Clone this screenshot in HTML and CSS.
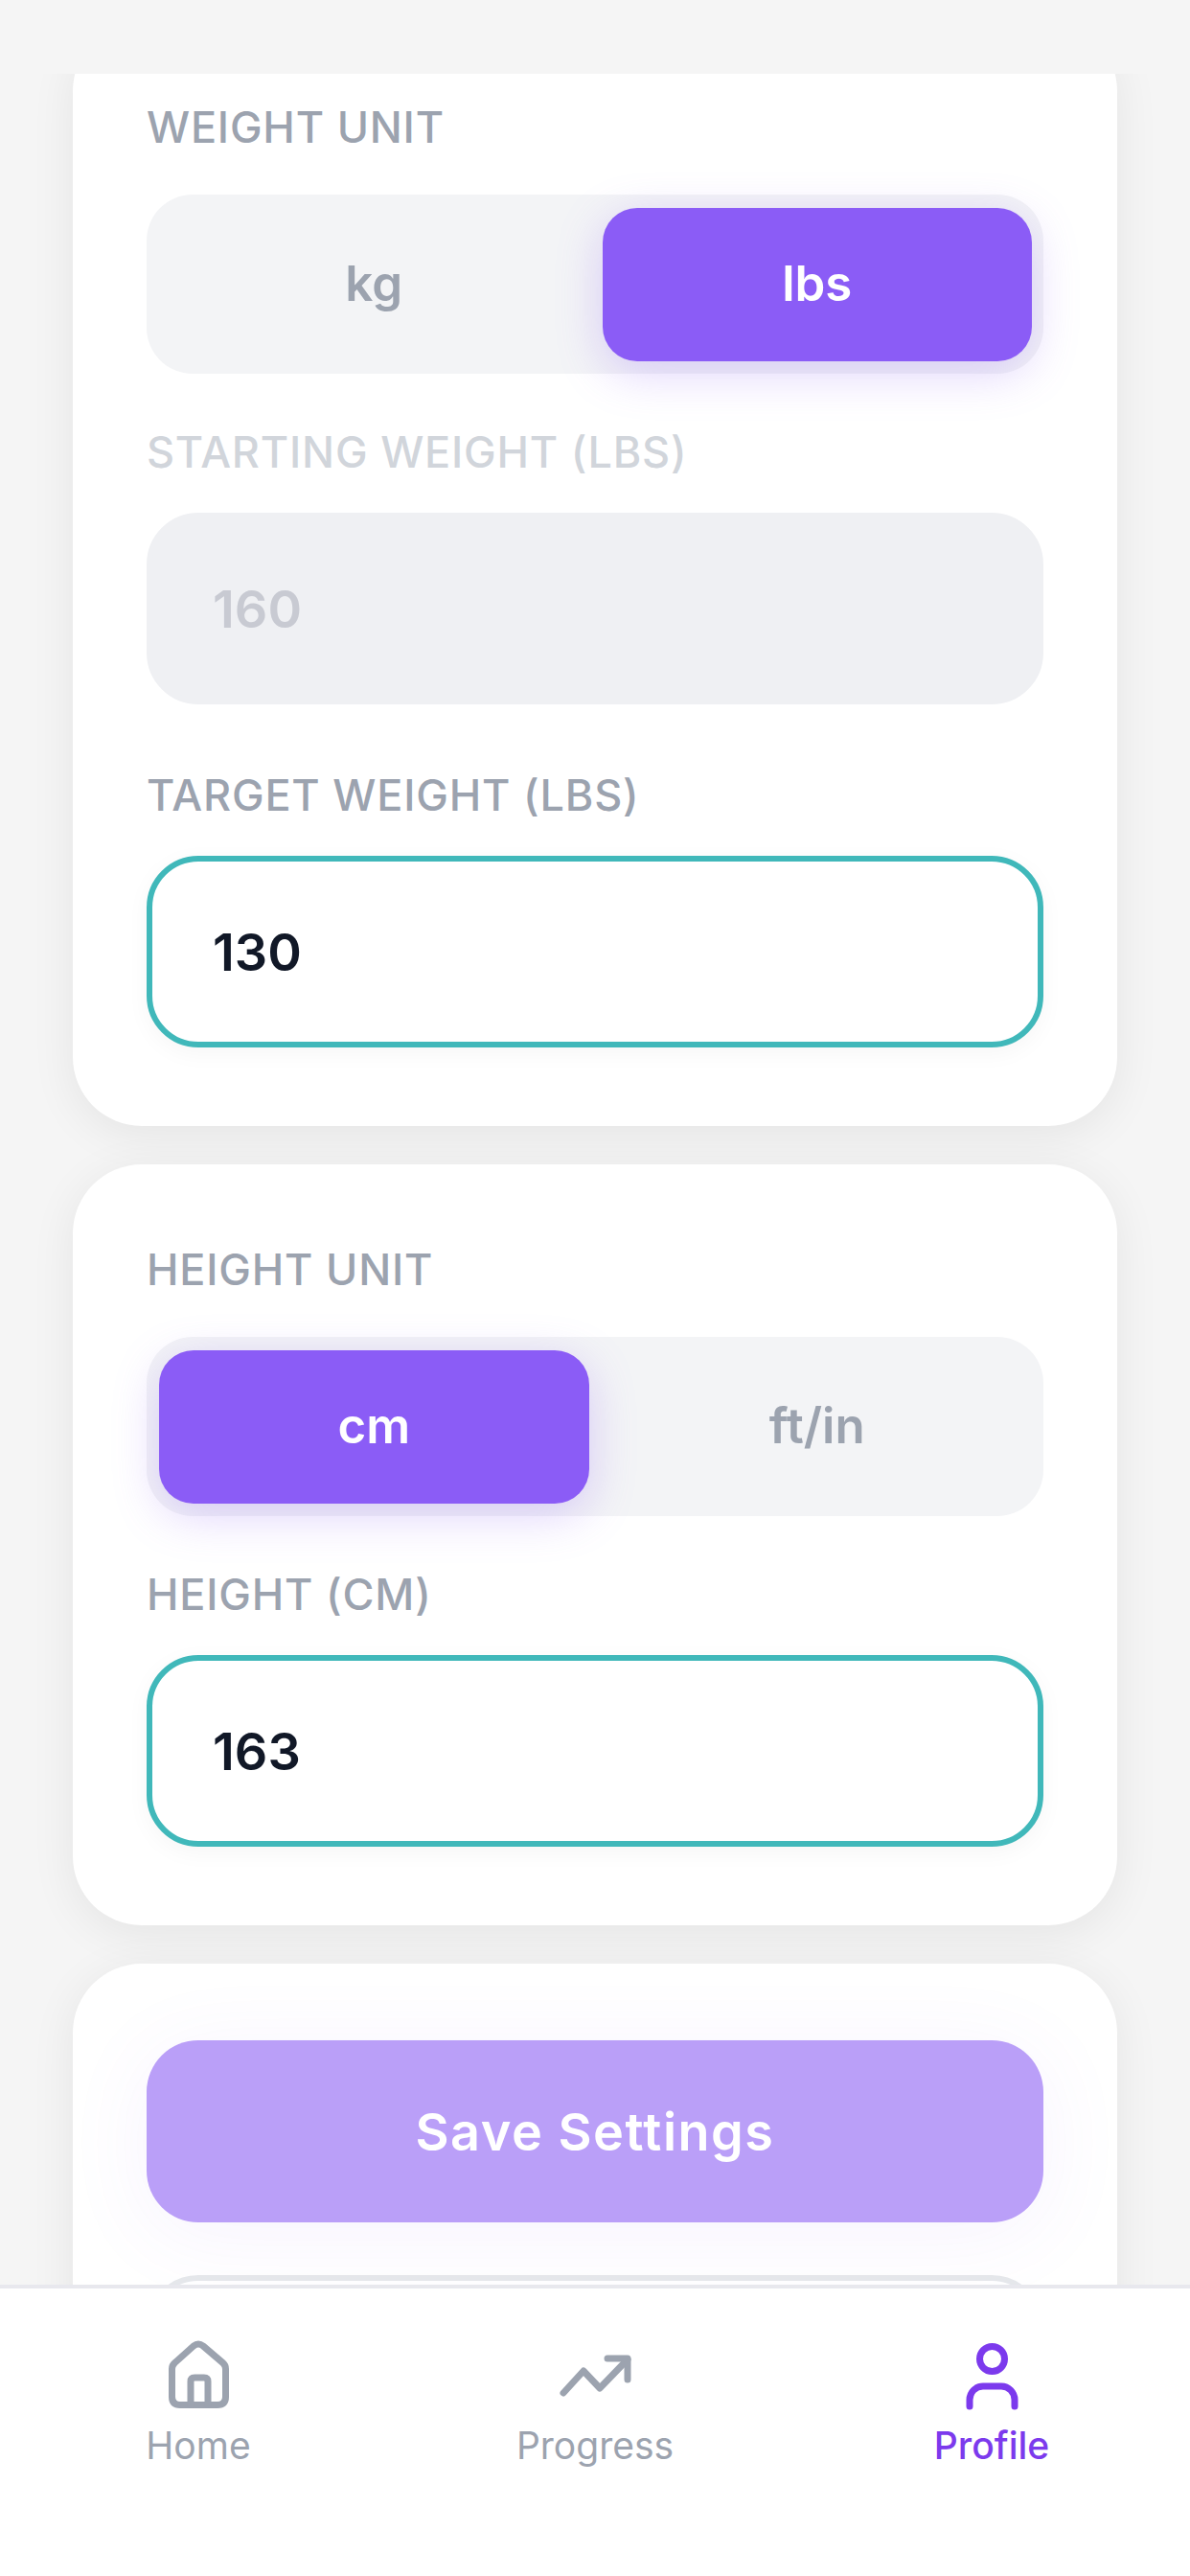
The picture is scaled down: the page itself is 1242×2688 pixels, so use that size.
FILE: index.html
```html
<!DOCTYPE html>
<html>
<head lang="en">
    <meta charset="UTF-8">
    <title>Profile</title>
    <link rel="stylesheet" href="styles.css">
</head>
<body>
<div class="screen">
    <div class="scroll">
        <div class="scrollInner">
            <div class="card">
                <div class="label">WEIGHT UNIT</div>
                <div class="seg">
                    <div class="segItem">kg</div>
                    <div class="segItem segActive">lbs</div>
                </div>
                <div class="label labelOff">STARTING WEIGHT (LBS)</div>
                <div class="input inputOff">160</div>
                <div class="label">TARGET WEIGHT (LBS)</div>
                <div class="input">130</div>
            </div>
            <div class="card">
                <div class="label">HEIGHT UNIT</div>
                <div class="seg">
                    <div class="segItem segActive">cm</div>
                    <div class="segItem">ft/in</div>
                </div>
                <div class="label">HEIGHT (CM)</div>
                <div class="input">163</div>
            </div>
            <div class="card saveCard">
                <div class="saveBtn">Save Settings</div>
                <div class="ghostBtn"></div>
            </div>
        </div>
    </div>
    <div class="nav">
        <div class="navItem">
            <svg class="navIcon" viewBox="0 0 84 84">
                <path d="M14.5 36Q14.5 32 17.5 29.5L37 12Q42 8 47 12L67.5 29.5Q70.5 32 70.5 36V65Q70.5 73.5 62 73.5H23Q14.5 73.5 14.5 65Z"/>
                <path d="M34 73.5V49Q34 45 38 45H48Q52 45 52 49V73.5"/>
            </svg>
            <span>Home</span>
        </div>
        <div class="navItem">
            <svg class="navIcon" viewBox="0 0 84 84">
                <path d="M9 61L30 38L47 56L76 26"/>
                <path d="M55 25H76V47"/>
            </svg>
            <span>Progress</span>
        </div>
        <div class="navItem navOn">
            <svg class="navIcon" viewBox="0 0 84 84">
                <circle cx="42.5" cy="25.5" r="13"/>
                <path d="M19 75V68A14 14 0 0 1 33 54H52A14 14 0 0 1 66 68V75"/>
            </svg>
            <span>Profile</span>
        </div>
    </div>
</div>
</body>
</html>
```

FILE: styles.css
```css
*{
    margin:0;
    padding:0;
    box-sizing:border-box;
}
html,body{
    height:100%;
}
body{
    background:#f5f5f5;
    font-family:Inter,"Liberation Sans",sans-serif;
    overflow:hidden;
}
.screen{
    width:1242px;
    height:2688px;
    display:flex;
    flex-direction:column;
    padding-top:77px;
}
.scroll{
    flex:1;
    min-height:0;
    overflow:hidden;
    padding:0 76px;
}
.scrollInner{
    margin-top:-54px;
    display:flex;
    flex-direction:column;
    gap:40px;
}
.card{
    background:#fff;
    border-radius:72px;
    padding:83px 77px 82px;
    box-shadow:0 9px 48px rgba(0,0,0,.07);
}
.saveCard{
    padding-top:80px;
}
.label{
    font-size:45px;
    line-height:54px;
    font-weight:500;
    letter-spacing:.8px;
    color:#9ca3af;
    margin-bottom:36px;
}
.labelOff{
    color:#d1d5db;
}
.seg{
    display:flex;
    gap:14px;
    height:187px;
    padding:14px 12px 13px 13px;
    margin:43px 0 55px;
    background:#f3f4f6;
    border-radius:48px;
}
.segItem{
    flex:1;
    display:flex;
    align-items:center;
    justify-content:center;
    padding-bottom:3px;
    border-radius:36px;
    font-size:51px;
    font-weight:600;
    color:#9ca3af;
}
.segActive{
    background:#8b5cf6;
    color:#fff;
    box-shadow:0 12px 48px rgba(139,92,246,.28);
}
.input{
    height:200px;
    margin-bottom:68px;
    padding-left:63px;
    display:flex;
    align-items:center;
    background:#fff;
    border:6px solid #40b8ba;
    border-radius:54px;
    font-size:54px;
    font-weight:600;
    color:#111827;
    box-shadow:0 6px 24px rgba(0,0,0,.04);
}
.input:last-child{
    margin-bottom:0;
}
.inputOff{
    background:#eff0f3;
    border-color:#eff0f3;
    color:#c8cad2;
    box-shadow:none;
}
.saveBtn{
    height:190px;
    display:flex;
    align-items:center;
    justify-content:center;
    background:#ba9ff8;
    border-radius:54px;
    font-size:54px;
    font-weight:600;
    letter-spacing:1.5px;
    color:#fff;
    box-shadow:0 12px 90px rgba(139,92,246,.07);
}
.ghostBtn{
    height:190px;
    margin-top:55px;
    border:6px solid #e5e7eb;
    border-radius:54px;
}
.nav{
    height:304px;
    flex-shrink:0;
    position:relative;
    display:flex;
    padding-top:48px;
    background:#fff;
    border-top:4px solid #e8e8ee;
}
.navItem{
    flex:1;
    display:flex;
    flex-direction:column;
    align-items:center;
    gap:8px;
    font-size:39px;
    line-height:48px;
    color:#9ca3af;
}
.navIcon{
    width:84px;
    height:84px;
    fill:none;
    stroke:#9ca3af;
    stroke-width:7;
    stroke-linecap:round;
    stroke-linejoin:round;
}
.navOn{
    color:#7c3aed;
    font-weight:500;
}
.navOn .navIcon{
    stroke:#7c3aed;
}
```
